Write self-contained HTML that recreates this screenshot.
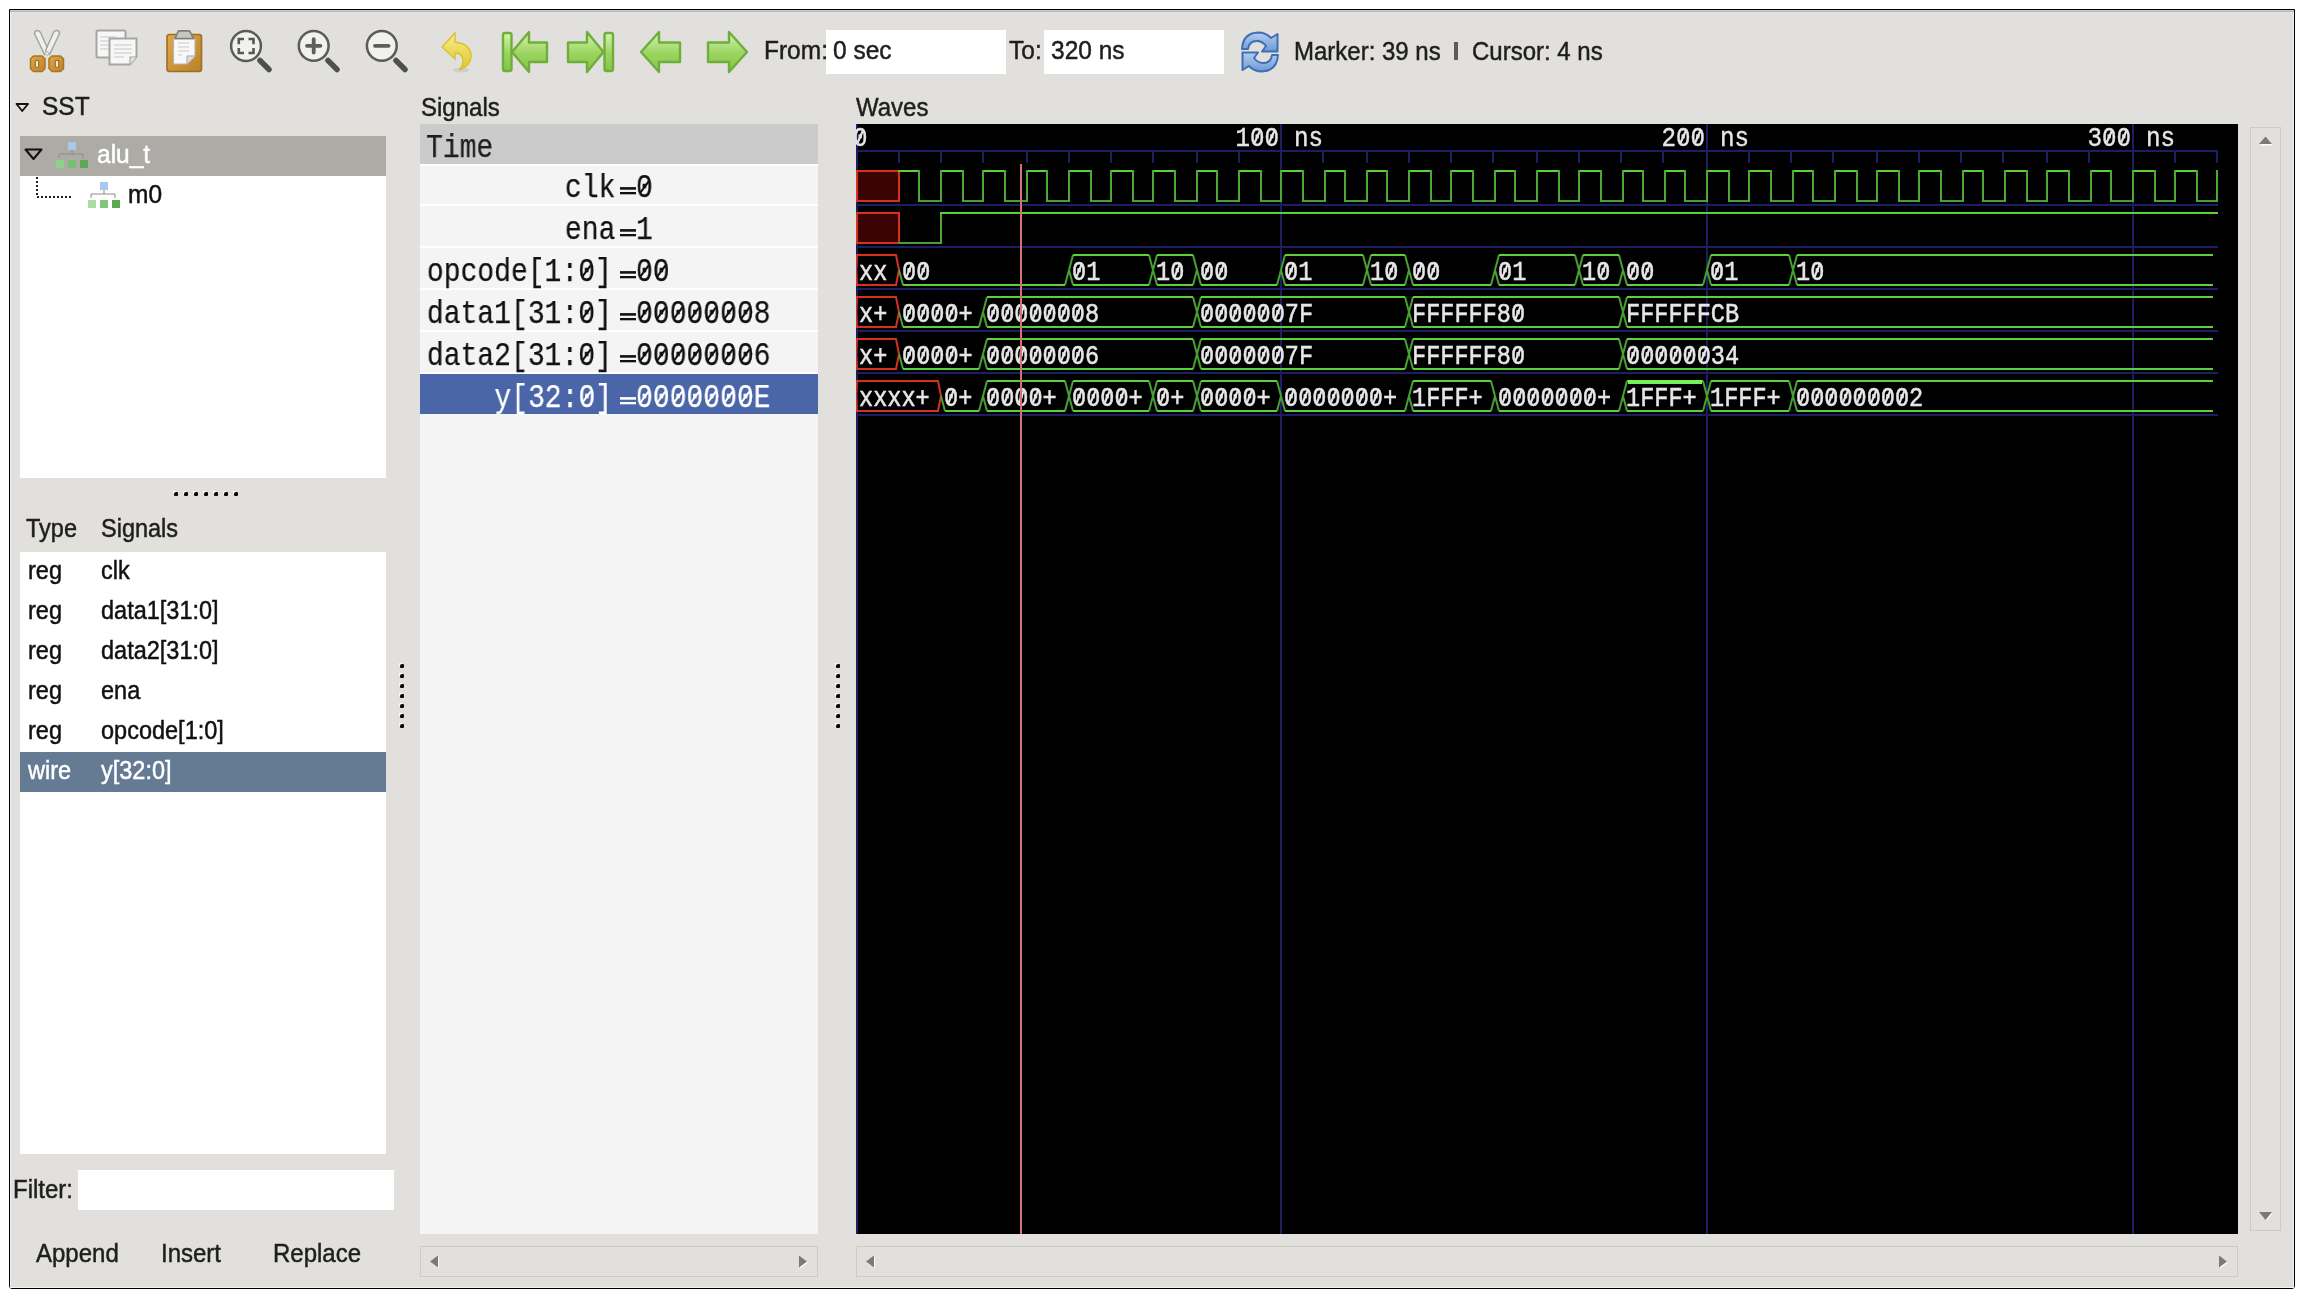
<!DOCTYPE html>
<html><head><meta charset="utf-8"><title>GTKWave</title>
<style>
html,body{margin:0;padding:0;background:#fff;width:2304px;height:1298px;overflow:hidden;position:relative}
body{font-family:"Liberation Sans", sans-serif}
</style></head><body>
<div style="position:absolute;left:9px;top:9px;width:2284px;height:1278px;border:1px solid #000;background:#e2e0dc;border-radius:0 0 3px 3px"></div>
<div style="position:absolute;left:10px;top:10px;width:2284px;height:1px;background:#c8c7c4;"></div>
<div style="position:absolute;left:10px;top:11px;width:2284px;height:1px;background:#bcbab6;"></div>
<div style="position:absolute;left:10px;top:12px;width:1px;height:1275px;background:#f2f1ee;"></div>
<div style="position:absolute;left:2293px;top:12px;width:1px;height:1275px;background:#f2f1ee;"></div>
<div style="position:absolute;left:10px;top:1287px;width:2284px;height:1px;background:#f2f1ee;"></div>

<svg style="position:absolute;left:0;top:0" width="1300" height="90" viewBox="0 0 1300 90">
<defs>
<linearGradient id="gArr" x1="0" y1="0" x2="0" y2="1"><stop offset="0" stop-color="#d6f2b0"/><stop offset="0.55" stop-color="#9ad45e"/><stop offset="1" stop-color="#86c44a"/></linearGradient>
<linearGradient id="gBlue" x1="0" y1="0" x2="0" y2="1"><stop offset="0" stop-color="#b4cdee"/><stop offset="1" stop-color="#6b9ad6"/></linearGradient>
<linearGradient id="gOr" x1="0" y1="0" x2="1" y2="1"><stop offset="0" stop-color="#e0a848"/><stop offset="1" stop-color="#b9822c"/></linearGradient>
<linearGradient id="gYel" x1="0" y1="0" x2="0" y2="1"><stop offset="0" stop-color="#f4ec88"/><stop offset="1" stop-color="#e2c82a"/></linearGradient>
</defs>
<!-- scissors -->
<g>
<path d="M34.5 33.5 Q34.8 30.3 37.5 30.5 Q40 30.8 41 33.5 L48.5 50.5 L44.5 54.5 Z" fill="#efefee" stroke="#a3a4a1" stroke-width="1.5" stroke-linejoin="round"/>
<path d="M59.5 33.5 Q59.2 30.3 56.5 30.5 Q54 30.8 53 33.5 L45.5 50.5 L49.5 54.5 Z" fill="#efefee" stroke="#a3a4a1" stroke-width="1.5" stroke-linejoin="round"/>
<circle cx="47" cy="53.5" r="1.8" fill="#eaeaea" stroke="#b9b9b7" stroke-width="1"/>
<path d="M33.5 56 H42 L45 58.8 V68.5 L42.2 71.5 H33.5 L30.5 68.8 V58.8 Z" fill="url(#gOr)" stroke="#a8761e" stroke-width="1.5" stroke-linejoin="round"/>
<path d="M52 56 H60.5 L63.5 58.8 V68.8 L60.5 71.5 H52 L49 68.5 V58.8 Z" fill="url(#gOr)" stroke="#a8761e" stroke-width="1.5" stroke-linejoin="round"/>
<rect x="35.3" y="60.5" width="3.4" height="6.8" rx="0.8" fill="#f1e6cf" stroke="#9c6a1a" stroke-width="1.1"/>
<rect x="55.3" y="60.5" width="3.4" height="6.8" rx="0.8" fill="#f1e6cf" stroke="#9c6a1a" stroke-width="1.1"/>
</g>
<!-- copy -->
<g>
<rect x="96.5" y="30.5" width="29" height="27" rx="1.5" fill="#f7f7f7" stroke="#a5a6a3" stroke-width="2"/>
<path d="M100 37h16 M100 41h16 M100 45h16 M100 49h16" stroke="#c8c9c6" stroke-width="1.2"/>
<path d="M109.5 38.5 H136.5 V57 L130 64.5 H109.5 Z" fill="#f7f7f7" stroke="#a5a6a3" stroke-width="2"/>
<path d="M130 64.5 V57 H136.5" fill="#e4e4e2" stroke="#a5a6a3" stroke-width="1.2"/>
<path d="M114 45h18 M114 49h18 M114 53h18 M114 57h10" stroke="#c8c9c6" stroke-width="1.2"/>
</g>
<!-- paste -->
<g>
<rect x="167" y="34.5" width="34.5" height="37" rx="2.5" fill="url(#gOr)" stroke="#9c6e22" stroke-width="1.6"/>
<path d="M173.5 39 H195 V56 L187 64 H173.5 Z" fill="#f8f8f8" stroke="#b5b5b2" stroke-width="1.2"/>
<path d="M187 64 V56 H195" fill="#dcdcda" stroke="#a5a6a3" stroke-width="1"/>
<path d="M178 43h11 M178 47h11 M178 51h11 M178 55h4" stroke="#c9c9c6" stroke-width="1.1"/>
<path d="M178.5 30.8 H189.5 L193.5 38.5 H175 Z" fill="#c6c7c1" stroke="#7f807c" stroke-width="1.7" stroke-linejoin="round"/>
</g>
<!-- zoom fit -->
<g>
<line x1="260" y1="60.5" x2="269" y2="69.5" stroke="#4e504f" stroke-width="5.5" stroke-linecap="round"/>
<circle cx="246" cy="46" r="14.9" fill="#f1f1f0" stroke="#5a5b5a" stroke-width="2.5"/>
<path d="M238.8 44.2 V39 H244 M248.5 39 H253.5 V44.2 M253.5 48 V53 H248.5 M244 53 H238.8 V48" fill="none" stroke="#555755" stroke-width="2.6"/>
</g>
<!-- zoom in -->
<g>
<line x1="328" y1="60.5" x2="337" y2="69.5" stroke="#4e504f" stroke-width="5.5" stroke-linecap="round"/>
<circle cx="313.7" cy="45.8" r="14.9" fill="#f1f1f0" stroke="#5a5b5a" stroke-width="2.5"/>
<path d="M307 45.8 H320.4 M313.7 39.1 V52.5" stroke="#5d5f5c" stroke-width="3.8" stroke-linecap="round"/>
</g>
<!-- zoom out -->
<g>
<line x1="396" y1="60.5" x2="405" y2="69.5" stroke="#4e504f" stroke-width="5.5" stroke-linecap="round"/>
<circle cx="381.8" cy="45.8" r="14.9" fill="#f1f1f0" stroke="#5a5b5a" stroke-width="2.5"/>
<path d="M375 45.8 H388.6" stroke="#5d5f5c" stroke-width="3.8" stroke-linecap="round"/>
</g>
<!-- undo -->
<g>
<ellipse cx="461" cy="70" rx="8" ry="2.5" fill="#000" opacity="0.08"/>
<path d="M455 33 L442 47 L455 59 L455 53 Q463 53 463 61 Q463 66 459 70 Q471 66 471 56 Q471 44 455 42 Z" fill="url(#gYel)" stroke="#d9c030" stroke-width="1.4"/>
</g>
<!-- first -->
<g stroke="#6fae3c" stroke-width="2.4" fill="url(#gArr)" stroke-linejoin="round">
<rect x="503" y="33" width="8.5" height="38" rx="2"/>
<path d="M512 52 L529 32 V42.5 H547 V62 H529 V72 Z"/>
</g>
<!-- last -->
<g stroke="#6fae3c" stroke-width="2.4" fill="url(#gArr)" stroke-linejoin="round">
<path d="M568 42.5 H587 V32 L603.5 52 L587 72 V62 H568 Z"/>
<rect x="604.5" y="33" width="8.5" height="38" rx="2"/>
</g>
<!-- back -->
<g stroke="#6fae3c" stroke-width="2.4" fill="url(#gArr)" stroke-linejoin="round">
<path d="M641 52 L659 32 V42.5 H680 V62 H659 V72 Z"/>
</g>
<!-- forward -->
<g stroke="#6fae3c" stroke-width="2.4" fill="url(#gArr)" stroke-linejoin="round">
<path d="M708 42.5 H729 V32 L747 52 L729 72 V62 H708 Z"/>
</g>
<!-- refresh -->
<g stroke="#3f6eb3" stroke-width="2" fill="url(#gBlue)" stroke-linejoin="round">
<path d="M1242 49 Q1243 33 1258 32.5 Q1266 32.5 1271 38 L1277.5 34 V51.5 H1262 L1266 46 Q1262 41 1257 41 Q1249 41 1248 49 Z"/>
<path d="M1278 55 Q1277 71 1262 71.5 Q1254 71.5 1249 66 L1242.5 70 V52.5 H1258 L1254 58 Q1258 63 1263 63 Q1271 63 1272 55 Z"/>
</g>
</svg>

<div style="position:absolute;left:826px;top:30px;width:180px;height:44px;background:#ffffff;"></div>
<div style="position:absolute;left:764px;top:39.26px;font-family:'Liberation Sans', sans-serif;font-size:24.5px;line-height:24.5px;white-space:pre;color:#1e1e1e;will-change:transform;transform:scale(1.0,1.07);transform-origin:left 20.74px;-webkit-text-stroke:0.45px #1e1e1e;">From:</div>
<div style="position:absolute;left:833px;top:39.26px;font-family:'Liberation Sans', sans-serif;font-size:24.5px;line-height:24.5px;white-space:pre;color:#1e1e1e;will-change:transform;transform:scale(1.0,1.07);transform-origin:left 20.74px;-webkit-text-stroke:0.45px #1e1e1e;">0 sec</div>
<div style="position:absolute;left:1044px;top:30px;width:180px;height:44px;background:#ffffff;"></div>
<div style="position:absolute;left:1009px;top:39.26px;font-family:'Liberation Sans', sans-serif;font-size:24.5px;line-height:24.5px;white-space:pre;color:#1e1e1e;will-change:transform;transform:scale(1.0,1.07);transform-origin:left 20.74px;-webkit-text-stroke:0.45px #1e1e1e;">To:</div>
<div style="position:absolute;left:1051px;top:39.26px;font-family:'Liberation Sans', sans-serif;font-size:24.5px;line-height:24.5px;white-space:pre;color:#1e1e1e;will-change:transform;transform:scale(1.0,1.07);transform-origin:left 20.74px;-webkit-text-stroke:0.45px #1e1e1e;">320 ns</div>
<div style="position:absolute;left:1294px;top:39.68px;font-family:'Liberation Sans', sans-serif;font-size:24px;line-height:24px;white-space:pre;color:#1e1e1e;will-change:transform;transform:scale(1.0,1.07);transform-origin:left 20.32px;-webkit-text-stroke:0.45px #1e1e1e;">Marker: 39 ns</div>
<div style="position:absolute;left:1454px;top:42px;width:4px;height:18px;background:#5c5c5c;"></div>
<div style="position:absolute;left:1471.5px;top:39.68px;font-family:'Liberation Sans', sans-serif;font-size:24px;line-height:24px;white-space:pre;color:#1e1e1e;will-change:transform;transform:scale(1.0,1.07);transform-origin:left 20.32px;-webkit-text-stroke:0.45px #1e1e1e;">Cursor: 4 ns</div>
<svg style="position:absolute;left:14px;top:100px" width="20" height="16"><path d="M2.5 4 H14 L8.25 11 Z" fill="none" stroke="#111" stroke-width="1.8" stroke-linejoin="round"/></svg>
<div style="position:absolute;left:42px;top:95.26px;font-family:'Liberation Sans', sans-serif;font-size:24.5px;line-height:24.5px;white-space:pre;color:#1e1e1e;will-change:transform;transform:scale(1.0,1.07);transform-origin:left 20.74px;-webkit-text-stroke:0.45px #1e1e1e;">SST</div>
<div style="position:absolute;left:20px;top:136px;width:366px;height:342px;background:#ffffff;"></div>
<div style="position:absolute;left:20px;top:136px;width:366px;height:40px;background:#adaba6;"></div>
<svg style="position:absolute;left:20px;top:136px" width="120" height="80"><path d="M5.5 13.5 H21.5 L13.5 23 Z" fill="none" stroke="#111" stroke-width="2" stroke-linejoin="round"/><rect x="48" y="6" width="8" height="8" fill="#a9c8ee"/><rect x="36" y="24" width="8" height="8" fill="#8fd08a"/><rect x="48" y="24" width="8" height="8" fill="#78c070"/><rect x="60" y="24" width="8" height="8" fill="#5aa852"/><path d="M39 22 V18 H63 V22 M52 14 V18" fill="none" stroke="#8a8a8a" stroke-width="1"/><path d="M17 41 V61 H52" fill="none" stroke="#222" stroke-width="2" stroke-dasharray="2,2"/><rect x="80" y="46" width="8" height="8" fill="#a9c8ee"/><rect x="68" y="64" width="8" height="8" fill="#a8dca0"/><rect x="80" y="64" width="8" height="8" fill="#82c67a"/><rect x="92" y="64" width="8" height="8" fill="#5aa852"/><path d="M71 62 V58 H95 V62 M84 54 V58" fill="none" stroke="#8a8a8a" stroke-width="1"/></svg>
<div style="position:absolute;left:97px;top:143.26px;font-family:'Liberation Sans', sans-serif;font-size:24.5px;line-height:24.5px;white-space:pre;color:#ffffff;will-change:transform;transform:scale(1.0,1.07);transform-origin:left 20.74px;-webkit-text-stroke:0.45px #ffffff;">alu_t</div>
<div style="position:absolute;left:128px;top:183.26px;font-family:'Liberation Sans', sans-serif;font-size:24.5px;line-height:24.5px;white-space:pre;color:#111;will-change:transform;transform:scale(1.0,1.07);transform-origin:left 20.74px;-webkit-text-stroke:0.45px #111;">m0</div>
<div style="position:absolute;left:173px;top:491px;width:3px;height:3px;background:#fff;border-radius:1px"></div>
<div style="position:absolute;left:174px;top:492px;width:4px;height:4px;background:#0a0a0a;border-radius:2px 1px 1px 1px"></div>
<div style="position:absolute;left:183px;top:491px;width:3px;height:3px;background:#fff;border-radius:1px"></div>
<div style="position:absolute;left:184px;top:492px;width:4px;height:4px;background:#0a0a0a;border-radius:2px 1px 1px 1px"></div>
<div style="position:absolute;left:193px;top:491px;width:3px;height:3px;background:#fff;border-radius:1px"></div>
<div style="position:absolute;left:194px;top:492px;width:4px;height:4px;background:#0a0a0a;border-radius:2px 1px 1px 1px"></div>
<div style="position:absolute;left:203px;top:491px;width:3px;height:3px;background:#fff;border-radius:1px"></div>
<div style="position:absolute;left:204px;top:492px;width:4px;height:4px;background:#0a0a0a;border-radius:2px 1px 1px 1px"></div>
<div style="position:absolute;left:213px;top:491px;width:3px;height:3px;background:#fff;border-radius:1px"></div>
<div style="position:absolute;left:214px;top:492px;width:4px;height:4px;background:#0a0a0a;border-radius:2px 1px 1px 1px"></div>
<div style="position:absolute;left:223px;top:491px;width:3px;height:3px;background:#fff;border-radius:1px"></div>
<div style="position:absolute;left:224px;top:492px;width:4px;height:4px;background:#0a0a0a;border-radius:2px 1px 1px 1px"></div>
<div style="position:absolute;left:233px;top:491px;width:3px;height:3px;background:#fff;border-radius:1px"></div>
<div style="position:absolute;left:234px;top:492px;width:4px;height:4px;background:#0a0a0a;border-radius:2px 1px 1px 1px"></div>
<div style="position:absolute;left:26px;top:518.10px;font-family:'Liberation Sans', sans-serif;font-size:23.5px;line-height:23.5px;white-space:pre;color:#1e1e1e;will-change:transform;transform:scale(1.0,1.07);transform-origin:left 19.90px;-webkit-text-stroke:0.45px #1e1e1e;">Type</div>
<div style="position:absolute;left:101px;top:518.10px;font-family:'Liberation Sans', sans-serif;font-size:23.5px;line-height:23.5px;white-space:pre;color:#1e1e1e;will-change:transform;transform:scale(1.0,1.07);transform-origin:left 19.90px;-webkit-text-stroke:0.45px #1e1e1e;">Signals</div>
<div style="position:absolute;left:20px;top:552px;width:366px;height:602px;background:#ffffff;"></div>
<div style="position:absolute;left:28px;top:559.90px;font-family:'Liberation Sans', sans-serif;font-size:23.5px;line-height:23.5px;white-space:pre;color:#111;will-change:transform;transform:scale(1.0,1.07);transform-origin:left 19.90px;-webkit-text-stroke:0.45px #111;">reg</div>
<div style="position:absolute;left:101px;top:559.90px;font-family:'Liberation Sans', sans-serif;font-size:23.5px;line-height:23.5px;white-space:pre;color:#111;will-change:transform;transform:scale(1.0,1.07);transform-origin:left 19.90px;-webkit-text-stroke:0.45px #111;">clk</div>
<div style="position:absolute;left:28px;top:599.90px;font-family:'Liberation Sans', sans-serif;font-size:23.5px;line-height:23.5px;white-space:pre;color:#111;will-change:transform;transform:scale(1.0,1.07);transform-origin:left 19.90px;-webkit-text-stroke:0.45px #111;">reg</div>
<div style="position:absolute;left:101px;top:599.90px;font-family:'Liberation Sans', sans-serif;font-size:23.5px;line-height:23.5px;white-space:pre;color:#111;will-change:transform;transform:scale(1.0,1.07);transform-origin:left 19.90px;-webkit-text-stroke:0.45px #111;">data1[31:0]</div>
<div style="position:absolute;left:28px;top:639.90px;font-family:'Liberation Sans', sans-serif;font-size:23.5px;line-height:23.5px;white-space:pre;color:#111;will-change:transform;transform:scale(1.0,1.07);transform-origin:left 19.90px;-webkit-text-stroke:0.45px #111;">reg</div>
<div style="position:absolute;left:101px;top:639.90px;font-family:'Liberation Sans', sans-serif;font-size:23.5px;line-height:23.5px;white-space:pre;color:#111;will-change:transform;transform:scale(1.0,1.07);transform-origin:left 19.90px;-webkit-text-stroke:0.45px #111;">data2[31:0]</div>
<div style="position:absolute;left:28px;top:679.90px;font-family:'Liberation Sans', sans-serif;font-size:23.5px;line-height:23.5px;white-space:pre;color:#111;will-change:transform;transform:scale(1.0,1.07);transform-origin:left 19.90px;-webkit-text-stroke:0.45px #111;">reg</div>
<div style="position:absolute;left:101px;top:679.90px;font-family:'Liberation Sans', sans-serif;font-size:23.5px;line-height:23.5px;white-space:pre;color:#111;will-change:transform;transform:scale(1.0,1.07);transform-origin:left 19.90px;-webkit-text-stroke:0.45px #111;">ena</div>
<div style="position:absolute;left:28px;top:719.90px;font-family:'Liberation Sans', sans-serif;font-size:23.5px;line-height:23.5px;white-space:pre;color:#111;will-change:transform;transform:scale(1.0,1.07);transform-origin:left 19.90px;-webkit-text-stroke:0.45px #111;">reg</div>
<div style="position:absolute;left:101px;top:719.90px;font-family:'Liberation Sans', sans-serif;font-size:23.5px;line-height:23.5px;white-space:pre;color:#111;will-change:transform;transform:scale(1.0,1.07);transform-origin:left 19.90px;-webkit-text-stroke:0.45px #111;">opcode[1:0]</div>
<div style="position:absolute;left:20px;top:752px;width:366px;height:40px;background:#657a93;"></div>
<div style="position:absolute;left:28px;top:759.90px;font-family:'Liberation Sans', sans-serif;font-size:23.5px;line-height:23.5px;white-space:pre;color:#ffffff;will-change:transform;transform:scale(1.0,1.07);transform-origin:left 19.90px;-webkit-text-stroke:0.45px #ffffff;">wire</div>
<div style="position:absolute;left:101px;top:759.90px;font-family:'Liberation Sans', sans-serif;font-size:23.5px;line-height:23.5px;white-space:pre;color:#ffffff;will-change:transform;transform:scale(1.0,1.07);transform-origin:left 19.90px;-webkit-text-stroke:0.45px #ffffff;">y[32:0]</div>
<div style="position:absolute;left:13px;top:1177.68px;font-family:'Liberation Sans', sans-serif;font-size:24px;line-height:24px;white-space:pre;color:#1e1e1e;will-change:transform;transform:scale(1.0,1.07);transform-origin:left 20.32px;-webkit-text-stroke:0.45px #1e1e1e;">Filter:</div>
<div style="position:absolute;left:78px;top:1170px;width:316px;height:40px;background:#ffffff;"></div>
<div style="position:absolute;left:36px;top:1241.68px;font-family:'Liberation Sans', sans-serif;font-size:24px;line-height:24px;white-space:pre;color:#1e1e1e;will-change:transform;transform:scale(1.0,1.07);transform-origin:left 20.32px;-webkit-text-stroke:0.45px #1e1e1e;">Append</div>
<div style="position:absolute;left:161px;top:1241.68px;font-family:'Liberation Sans', sans-serif;font-size:24px;line-height:24px;white-space:pre;color:#1e1e1e;will-change:transform;transform:scale(1.0,1.07);transform-origin:left 20.32px;-webkit-text-stroke:0.45px #1e1e1e;">Insert</div>
<div style="position:absolute;left:273px;top:1241.68px;font-family:'Liberation Sans', sans-serif;font-size:24px;line-height:24px;white-space:pre;color:#1e1e1e;will-change:transform;transform:scale(1.0,1.07);transform-origin:left 20.32px;-webkit-text-stroke:0.45px #1e1e1e;">Replace</div>
<div style="position:absolute;left:399px;top:663px;width:3px;height:3px;background:#fff;border-radius:1px"></div>
<div style="position:absolute;left:400px;top:664px;width:4px;height:4px;background:#0a0a0a;border-radius:2px 1px 1px 1px"></div>
<div style="position:absolute;left:399px;top:673px;width:3px;height:3px;background:#fff;border-radius:1px"></div>
<div style="position:absolute;left:400px;top:674px;width:4px;height:4px;background:#0a0a0a;border-radius:2px 1px 1px 1px"></div>
<div style="position:absolute;left:399px;top:683px;width:3px;height:3px;background:#fff;border-radius:1px"></div>
<div style="position:absolute;left:400px;top:684px;width:4px;height:4px;background:#0a0a0a;border-radius:2px 1px 1px 1px"></div>
<div style="position:absolute;left:399px;top:693px;width:3px;height:3px;background:#fff;border-radius:1px"></div>
<div style="position:absolute;left:400px;top:694px;width:4px;height:4px;background:#0a0a0a;border-radius:2px 1px 1px 1px"></div>
<div style="position:absolute;left:399px;top:703px;width:3px;height:3px;background:#fff;border-radius:1px"></div>
<div style="position:absolute;left:400px;top:704px;width:4px;height:4px;background:#0a0a0a;border-radius:2px 1px 1px 1px"></div>
<div style="position:absolute;left:399px;top:713px;width:3px;height:3px;background:#fff;border-radius:1px"></div>
<div style="position:absolute;left:400px;top:714px;width:4px;height:4px;background:#0a0a0a;border-radius:2px 1px 1px 1px"></div>
<div style="position:absolute;left:399px;top:723px;width:3px;height:3px;background:#fff;border-radius:1px"></div>
<div style="position:absolute;left:400px;top:724px;width:4px;height:4px;background:#0a0a0a;border-radius:2px 1px 1px 1px"></div>
<div style="position:absolute;left:835px;top:663px;width:3px;height:3px;background:#fff;border-radius:1px"></div>
<div style="position:absolute;left:836px;top:664px;width:4px;height:4px;background:#0a0a0a;border-radius:2px 1px 1px 1px"></div>
<div style="position:absolute;left:835px;top:673px;width:3px;height:3px;background:#fff;border-radius:1px"></div>
<div style="position:absolute;left:836px;top:674px;width:4px;height:4px;background:#0a0a0a;border-radius:2px 1px 1px 1px"></div>
<div style="position:absolute;left:835px;top:683px;width:3px;height:3px;background:#fff;border-radius:1px"></div>
<div style="position:absolute;left:836px;top:684px;width:4px;height:4px;background:#0a0a0a;border-radius:2px 1px 1px 1px"></div>
<div style="position:absolute;left:835px;top:693px;width:3px;height:3px;background:#fff;border-radius:1px"></div>
<div style="position:absolute;left:836px;top:694px;width:4px;height:4px;background:#0a0a0a;border-radius:2px 1px 1px 1px"></div>
<div style="position:absolute;left:835px;top:703px;width:3px;height:3px;background:#fff;border-radius:1px"></div>
<div style="position:absolute;left:836px;top:704px;width:4px;height:4px;background:#0a0a0a;border-radius:2px 1px 1px 1px"></div>
<div style="position:absolute;left:835px;top:713px;width:3px;height:3px;background:#fff;border-radius:1px"></div>
<div style="position:absolute;left:836px;top:714px;width:4px;height:4px;background:#0a0a0a;border-radius:2px 1px 1px 1px"></div>
<div style="position:absolute;left:835px;top:723px;width:3px;height:3px;background:#fff;border-radius:1px"></div>
<div style="position:absolute;left:836px;top:724px;width:4px;height:4px;background:#0a0a0a;border-radius:2px 1px 1px 1px"></div>
<div style="position:absolute;left:420.5px;top:95.68px;font-family:'Liberation Sans', sans-serif;font-size:24px;line-height:24px;white-space:pre;color:#1e1e1e;will-change:transform;transform:scale(1.0,1.07);transform-origin:left 20.32px;-webkit-text-stroke:0.45px #1e1e1e;">Signals</div>
<div style="position:absolute;left:420px;top:124px;width:398px;height:1110px;background:#f4f4f4;"></div>
<div style="position:absolute;left:420px;top:124px;width:398px;height:40px;background:#cbcbcb;"></div>
<div style="position:absolute;left:420px;top:164px;width:398px;height:2px;background:#ffffff;"></div>
<div style="position:absolute;left:425.5px;top:133.18px;font-family:'Liberation Mono', monospace;font-size:32.4px;line-height:32.4px;white-space:pre;color:#1e1e1e;will-change:transform;transform:scale(0.865,1.0);transform-origin:left 24.82px;-webkit-text-stroke:0.25px #1e1e1e;">Time</div>
<div style="position:absolute;left:420px;top:204px;width:398px;height:2px;background:#ffffff;"></div>
<div style="position:absolute;right:1688.5683886718748px;top:172.68px;font-family:'Liberation Mono', monospace;font-size:32.4px;line-height:32.4px;white-space:pre;color:#111;will-change:transform;transform:scale(0.865,1.0);transform-origin:right 24.82px;-webkit-text-stroke:0.25px #111;">clk</div>
<div style="position:absolute;left:636px;top:172.68px;font-family:'Liberation Mono', monospace;font-size:32.4px;line-height:32.4px;white-space:pre;color:#111;will-change:transform;transform:scale(0.865,1.0);transform-origin:left 24.82px;-webkit-text-stroke:0.25px #111;">0</div>
<div style="position:absolute;left:420px;top:246px;width:398px;height:2px;background:#ffffff;"></div>
<div style="position:absolute;right:1688.5683886718748px;top:214.68px;font-family:'Liberation Mono', monospace;font-size:32.4px;line-height:32.4px;white-space:pre;color:#111;will-change:transform;transform:scale(0.865,1.0);transform-origin:right 24.82px;-webkit-text-stroke:0.25px #111;">ena</div>
<div style="position:absolute;left:636px;top:214.68px;font-family:'Liberation Mono', monospace;font-size:32.4px;line-height:32.4px;white-space:pre;color:#111;will-change:transform;transform:scale(0.865,1.0);transform-origin:left 24.82px;-webkit-text-stroke:0.25px #111;">1</div>
<div style="position:absolute;left:420px;top:288px;width:398px;height:2px;background:#ffffff;"></div>
<div style="position:absolute;right:1692.3619570312499px;top:256.68px;font-family:'Liberation Mono', monospace;font-size:32.4px;line-height:32.4px;white-space:pre;color:#111;will-change:transform;transform:scale(0.865,1.0);transform-origin:right 24.82px;-webkit-text-stroke:0.25px #111;">opcode[1:0]</div>
<div style="position:absolute;left:636px;top:256.68px;font-family:'Liberation Mono', monospace;font-size:32.4px;line-height:32.4px;white-space:pre;color:#111;will-change:transform;transform:scale(0.865,1.0);transform-origin:left 24.82px;-webkit-text-stroke:0.25px #111;">00</div>
<div style="position:absolute;left:420px;top:330px;width:398px;height:2px;background:#ffffff;"></div>
<div style="position:absolute;right:1692.3619570312499px;top:298.68px;font-family:'Liberation Mono', monospace;font-size:32.4px;line-height:32.4px;white-space:pre;color:#111;will-change:transform;transform:scale(0.865,1.0);transform-origin:right 24.82px;-webkit-text-stroke:0.25px #111;">data1[31:0]</div>
<div style="position:absolute;left:636px;top:298.68px;font-family:'Liberation Mono', monospace;font-size:32.4px;line-height:32.4px;white-space:pre;color:#111;will-change:transform;transform:scale(0.865,1.0);transform-origin:left 24.82px;-webkit-text-stroke:0.25px #111;">00000008</div>
<div style="position:absolute;left:420px;top:372px;width:398px;height:2px;background:#ffffff;"></div>
<div style="position:absolute;right:1692.3619570312499px;top:340.68px;font-family:'Liberation Mono', monospace;font-size:32.4px;line-height:32.4px;white-space:pre;color:#111;will-change:transform;transform:scale(0.865,1.0);transform-origin:right 24.82px;-webkit-text-stroke:0.25px #111;">data2[31:0]</div>
<div style="position:absolute;left:636px;top:340.68px;font-family:'Liberation Mono', monospace;font-size:32.4px;line-height:32.4px;white-space:pre;color:#111;will-change:transform;transform:scale(0.865,1.0);transform-origin:left 24.82px;-webkit-text-stroke:0.25px #111;">00000006</div>
<div style="position:absolute;left:420px;top:374px;width:398px;height:40px;background:#4a65a8;"></div>
<div style="position:absolute;right:1692.3619570312499px;top:382.68px;font-family:'Liberation Mono', monospace;font-size:32.4px;line-height:32.4px;white-space:pre;color:#ffffff;will-change:transform;transform:scale(0.865,1.0);transform-origin:right 24.82px;-webkit-text-stroke:0.25px #ffffff;">y[32:0]</div>
<div style="position:absolute;left:636px;top:382.68px;font-family:'Liberation Mono', monospace;font-size:32.4px;line-height:32.4px;white-space:pre;color:#ffffff;will-change:transform;transform:scale(0.865,1.0);transform-origin:left 24.82px;-webkit-text-stroke:0.25px #ffffff;">0000000E</div>
<svg style="position:absolute;left:0;top:0;will-change:transform" width="900" height="450"><rect x="620" y="187.1" width="16" height="2.6" fill="#111"/><rect x="620" y="192.0" width="16" height="2.3" fill="#111"/><line x1="640.1" y1="193.0" x2="648.7" y2="181.3" stroke="#111" stroke-width="2.1"/><rect x="620" y="229.1" width="16" height="2.6" fill="#111"/><rect x="620" y="234.0" width="16" height="2.3" fill="#111"/><rect x="620" y="271.1" width="16" height="2.6" fill="#111"/><rect x="620" y="276.0" width="16" height="2.3" fill="#111"/><line x1="582.1" y1="277.0" x2="590.7" y2="265.3" stroke="#111" stroke-width="2.1"/><line x1="640.1" y1="277.0" x2="648.7" y2="265.3" stroke="#111" stroke-width="2.1"/><line x1="656.9" y1="277.0" x2="665.5" y2="265.3" stroke="#111" stroke-width="2.1"/><rect x="620" y="313.1" width="16" height="2.6" fill="#111"/><rect x="620" y="318.0" width="16" height="2.3" fill="#111"/><line x1="582.1" y1="319.0" x2="590.7" y2="307.3" stroke="#111" stroke-width="2.1"/><line x1="640.1" y1="319.0" x2="648.7" y2="307.3" stroke="#111" stroke-width="2.1"/><line x1="656.9" y1="319.0" x2="665.5" y2="307.3" stroke="#111" stroke-width="2.1"/><line x1="673.7" y1="319.0" x2="682.3" y2="307.3" stroke="#111" stroke-width="2.1"/><line x1="690.6" y1="319.0" x2="699.2" y2="307.3" stroke="#111" stroke-width="2.1"/><line x1="707.4" y1="319.0" x2="716.0" y2="307.3" stroke="#111" stroke-width="2.1"/><line x1="724.2" y1="319.0" x2="732.8" y2="307.3" stroke="#111" stroke-width="2.1"/><line x1="741.0" y1="319.0" x2="749.6" y2="307.3" stroke="#111" stroke-width="2.1"/><rect x="620" y="355.1" width="16" height="2.6" fill="#111"/><rect x="620" y="360.0" width="16" height="2.3" fill="#111"/><line x1="582.1" y1="361.0" x2="590.7" y2="349.3" stroke="#111" stroke-width="2.1"/><line x1="640.1" y1="361.0" x2="648.7" y2="349.3" stroke="#111" stroke-width="2.1"/><line x1="656.9" y1="361.0" x2="665.5" y2="349.3" stroke="#111" stroke-width="2.1"/><line x1="673.7" y1="361.0" x2="682.3" y2="349.3" stroke="#111" stroke-width="2.1"/><line x1="690.6" y1="361.0" x2="699.2" y2="349.3" stroke="#111" stroke-width="2.1"/><line x1="707.4" y1="361.0" x2="716.0" y2="349.3" stroke="#111" stroke-width="2.1"/><line x1="724.2" y1="361.0" x2="732.8" y2="349.3" stroke="#111" stroke-width="2.1"/><line x1="741.0" y1="361.0" x2="749.6" y2="349.3" stroke="#111" stroke-width="2.1"/><rect x="620" y="397.1" width="16" height="2.6" fill="#ffffff"/><rect x="620" y="402.0" width="16" height="2.3" fill="#ffffff"/><line x1="582.1" y1="403.0" x2="590.7" y2="391.3" stroke="#ffffff" stroke-width="2.1"/><line x1="640.1" y1="403.0" x2="648.7" y2="391.3" stroke="#ffffff" stroke-width="2.1"/><line x1="656.9" y1="403.0" x2="665.5" y2="391.3" stroke="#ffffff" stroke-width="2.1"/><line x1="673.7" y1="403.0" x2="682.3" y2="391.3" stroke="#ffffff" stroke-width="2.1"/><line x1="690.6" y1="403.0" x2="699.2" y2="391.3" stroke="#ffffff" stroke-width="2.1"/><line x1="707.4" y1="403.0" x2="716.0" y2="391.3" stroke="#ffffff" stroke-width="2.1"/><line x1="724.2" y1="403.0" x2="732.8" y2="391.3" stroke="#ffffff" stroke-width="2.1"/><line x1="741.0" y1="403.0" x2="749.6" y2="391.3" stroke="#ffffff" stroke-width="2.1"/></svg>
<div style="position:absolute;left:420px;top:1246px;width:396px;height:29px;border:1px solid #cdcbc7;background:#e2e0dc"></div>
<svg style="position:absolute;left:420px;top:1246px" width="398" height="31"><path d="M11 16.5 L19 10.5 V22.5 Z" fill="#fbfbfa"/><path d="M380 10.5 L388 16.5 L380 22.5 Z" fill="#fbfbfa"/><path d="M10 15.5 L18 9.5 V21.5 Z" fill="#7a7a7a"/><path d="M379 9.5 L387 15.5 L379 21.5 Z" fill="#7a7a7a"/></svg>
<div style="position:absolute;left:856px;top:1246px;width:1380px;height:29px;border:1px solid #cdcbc7;background:#e2e0dc"></div>
<svg style="position:absolute;left:856px;top:1246px" width="1382" height="31"><path d="M11 16.5 L19 10.5 V22.5 Z" fill="#fbfbfa"/><path d="M1364 10.5 L1372 16.5 L1364 22.5 Z" fill="#fbfbfa"/><path d="M10 15.5 L18 9.5 V21.5 Z" fill="#7a7a7a"/><path d="M1363 9.5 L1371 15.5 L1363 21.5 Z" fill="#7a7a7a"/></svg>
<div style="position:absolute;left:2250px;top:127px;width:29px;height:1102px;border:1px solid #cdcbc7;background:#e2e0dc"></div>
<svg style="position:absolute;left:2250px;top:127px" width="31" height="1104"><path d="M10 18.5 L16.5 11 L23 18.5 Z" fill="#fbfbfa"/><path d="M10 1086 L16.5 1094 L23 1086 Z" fill="#fbfbfa"/><path d="M9 17 L15.5 9.5 L22 17 Z" fill="#7a7a7a"/><path d="M9 1085 L15.5 1093 L22 1085 Z" fill="#7a7a7a"/></svg>
<div style="position:absolute;left:856px;top:95.68px;font-family:'Liberation Sans', sans-serif;font-size:24px;line-height:24px;white-space:pre;color:#1e1e1e;will-change:transform;transform:scale(1.0,1.07);transform-origin:left 20.32px;-webkit-text-stroke:0.45px #1e1e1e;">Waves</div>
<svg style="position:absolute;left:0;top:0;will-change:transform" width="2304" height="1298" viewBox="0 0 2304 1298"><defs><clipPath id="wclip"><rect x="856" y="124" width="1382" height="1110"/></clipPath></defs><g clip-path="url(#wclip)"><rect x="856" y="124" width="1382" height="1110" fill="#000"/><rect x="856" y="150" width="1362" height="2" fill="#1c1d62"/><rect x="898" y="150" width="2" height="13" fill="#1c1d62"/><rect x="940" y="150" width="2" height="13" fill="#1c1d62"/><rect x="982" y="150" width="2" height="13" fill="#1c1d62"/><rect x="1026" y="150" width="2" height="13" fill="#1c1d62"/><rect x="1068" y="150" width="2" height="13" fill="#1c1d62"/><rect x="1110" y="150" width="2" height="13" fill="#1c1d62"/><rect x="1152" y="150" width="2" height="13" fill="#1c1d62"/><rect x="1196" y="150" width="2" height="13" fill="#1c1d62"/><rect x="1238" y="150" width="2" height="13" fill="#1c1d62"/><rect x="1280" y="150" width="2" height="13" fill="#1c1d62"/><rect x="1322" y="150" width="2" height="13" fill="#1c1d62"/><rect x="1366" y="150" width="2" height="13" fill="#1c1d62"/><rect x="1408" y="150" width="2" height="13" fill="#1c1d62"/><rect x="1450" y="150" width="2" height="13" fill="#1c1d62"/><rect x="1492" y="150" width="2" height="13" fill="#1c1d62"/><rect x="1536" y="150" width="2" height="13" fill="#1c1d62"/><rect x="1578" y="150" width="2" height="13" fill="#1c1d62"/><rect x="1620" y="150" width="2" height="13" fill="#1c1d62"/><rect x="1662" y="150" width="2" height="13" fill="#1c1d62"/><rect x="1706" y="150" width="2" height="13" fill="#1c1d62"/><rect x="1748" y="150" width="2" height="13" fill="#1c1d62"/><rect x="1790" y="150" width="2" height="13" fill="#1c1d62"/><rect x="1832" y="150" width="2" height="13" fill="#1c1d62"/><rect x="1876" y="150" width="2" height="13" fill="#1c1d62"/><rect x="1918" y="150" width="2" height="13" fill="#1c1d62"/><rect x="1960" y="150" width="2" height="13" fill="#1c1d62"/><rect x="2002" y="150" width="2" height="13" fill="#1c1d62"/><rect x="2046" y="150" width="2" height="13" fill="#1c1d62"/><rect x="2088" y="150" width="2" height="13" fill="#1c1d62"/><rect x="2132" y="150" width="2" height="13" fill="#1c1d62"/><rect x="2174" y="150" width="2" height="13" fill="#1c1d62"/><rect x="2216" y="150" width="2" height="13" fill="#1c1d62"/><rect x="856" y="124" width="2" height="1110" fill="#1c1d62"/><rect x="1280" y="124" width="2" height="1110" fill="#1c1d62"/><rect x="1706" y="124" width="2" height="1110" fill="#1c1d62"/><rect x="2132" y="124" width="2" height="1110" fill="#1c1d62"/><rect x="856" y="204" width="1362" height="2" fill="#1c1d62"/><rect x="856" y="246" width="1362" height="2" fill="#1c1d62"/><rect x="856" y="288" width="1362" height="2" fill="#1c1d62"/><rect x="856" y="330" width="1362" height="2" fill="#1c1d62"/><rect x="856" y="372" width="1362" height="2" fill="#1c1d62"/><rect x="856" y="414" width="1362" height="2" fill="#1c1d62"/><text x="0" y="0" transform="translate(867.5,146) scale(0.89,1)" text-anchor="end" font-family="'Liberation Mono', monospace" font-size="27.2" fill="#e6e6e6" stroke="#e6e6e6" stroke-width="0.4">0</text><line x1="857.6" y1="142.8" x2="862.8" y2="131.0" stroke="#e6e6e6" stroke-width="2.2"/><text x="0" y="0" transform="translate(1279,146) scale(0.89,1)" text-anchor="end" font-family="'Liberation Mono', monospace" font-size="27.2" fill="#e6e6e6" stroke="#e6e6e6" stroke-width="0.4">100</text><line x1="1254.6" y1="142.8" x2="1259.8" y2="131.0" stroke="#e6e6e6" stroke-width="2.2"/><line x1="1269.1" y1="142.8" x2="1274.3" y2="131.0" stroke="#e6e6e6" stroke-width="2.2"/><text x="0" y="0" transform="translate(1294,146) scale(0.89,1)" text-anchor="start" font-family="'Liberation Mono', monospace" font-size="27.2" fill="#e6e6e6" stroke="#e6e6e6" stroke-width="0.4">ns</text><text x="0" y="0" transform="translate(1705,146) scale(0.89,1)" text-anchor="end" font-family="'Liberation Mono', monospace" font-size="27.2" fill="#e6e6e6" stroke="#e6e6e6" stroke-width="0.4">200</text><line x1="1680.6" y1="142.8" x2="1685.8" y2="131.0" stroke="#e6e6e6" stroke-width="2.2"/><line x1="1695.1" y1="142.8" x2="1700.3" y2="131.0" stroke="#e6e6e6" stroke-width="2.2"/><text x="0" y="0" transform="translate(1720,146) scale(0.89,1)" text-anchor="start" font-family="'Liberation Mono', monospace" font-size="27.2" fill="#e6e6e6" stroke="#e6e6e6" stroke-width="0.4">ns</text><text x="0" y="0" transform="translate(2131,146) scale(0.89,1)" text-anchor="end" font-family="'Liberation Mono', monospace" font-size="27.2" fill="#e6e6e6" stroke="#e6e6e6" stroke-width="0.4">300</text><line x1="2106.6" y1="142.8" x2="2111.8" y2="131.0" stroke="#e6e6e6" stroke-width="2.2"/><line x1="2121.1" y1="142.8" x2="2126.3" y2="131.0" stroke="#e6e6e6" stroke-width="2.2"/><text x="0" y="0" transform="translate(2146,146) scale(0.89,1)" text-anchor="start" font-family="'Liberation Mono', monospace" font-size="27.2" fill="#e6e6e6" stroke="#e6e6e6" stroke-width="0.4">ns</text><rect x="857" y="171" width="42" height="30" fill="#3a0404" stroke="#d8301f" stroke-width="2"/><rect x="898" y="170" width="22" height="2" fill="#5ccf3c"/><rect x="918" y="200" width="24" height="2" fill="#43a232"/><rect x="918" y="170" width="2" height="32" fill="#4aaa34"/><rect x="940" y="170" width="24" height="2" fill="#5ccf3c"/><rect x="940" y="170" width="2" height="32" fill="#4aaa34"/><rect x="962" y="200" width="22" height="2" fill="#43a232"/><rect x="962" y="170" width="2" height="32" fill="#4aaa34"/><rect x="982" y="170" width="24" height="2" fill="#5ccf3c"/><rect x="982" y="170" width="2" height="32" fill="#4aaa34"/><rect x="1004" y="200" width="24" height="2" fill="#43a232"/><rect x="1004" y="170" width="2" height="32" fill="#4aaa34"/><rect x="1026" y="170" width="22" height="2" fill="#5ccf3c"/><rect x="1026" y="170" width="2" height="32" fill="#4aaa34"/><rect x="1046" y="200" width="24" height="2" fill="#43a232"/><rect x="1046" y="170" width="2" height="32" fill="#4aaa34"/><rect x="1068" y="170" width="24" height="2" fill="#5ccf3c"/><rect x="1068" y="170" width="2" height="32" fill="#4aaa34"/><rect x="1090" y="200" width="22" height="2" fill="#43a232"/><rect x="1090" y="170" width="2" height="32" fill="#4aaa34"/><rect x="1110" y="170" width="24" height="2" fill="#5ccf3c"/><rect x="1110" y="170" width="2" height="32" fill="#4aaa34"/><rect x="1132" y="200" width="22" height="2" fill="#43a232"/><rect x="1132" y="170" width="2" height="32" fill="#4aaa34"/><rect x="1152" y="170" width="24" height="2" fill="#5ccf3c"/><rect x="1152" y="170" width="2" height="32" fill="#4aaa34"/><rect x="1174" y="200" width="24" height="2" fill="#43a232"/><rect x="1174" y="170" width="2" height="32" fill="#4aaa34"/><rect x="1196" y="170" width="22" height="2" fill="#5ccf3c"/><rect x="1196" y="170" width="2" height="32" fill="#4aaa34"/><rect x="1216" y="200" width="24" height="2" fill="#43a232"/><rect x="1216" y="170" width="2" height="32" fill="#4aaa34"/><rect x="1238" y="170" width="24" height="2" fill="#5ccf3c"/><rect x="1238" y="170" width="2" height="32" fill="#4aaa34"/><rect x="1260" y="200" width="22" height="2" fill="#43a232"/><rect x="1260" y="170" width="2" height="32" fill="#4aaa34"/><rect x="1280" y="170" width="24" height="2" fill="#5ccf3c"/><rect x="1280" y="170" width="2" height="32" fill="#4aaa34"/><rect x="1302" y="200" width="24" height="2" fill="#43a232"/><rect x="1302" y="170" width="2" height="32" fill="#4aaa34"/><rect x="1324" y="170" width="22" height="2" fill="#5ccf3c"/><rect x="1324" y="170" width="2" height="32" fill="#4aaa34"/><rect x="1344" y="200" width="24" height="2" fill="#43a232"/><rect x="1344" y="170" width="2" height="32" fill="#4aaa34"/><rect x="1366" y="170" width="22" height="2" fill="#5ccf3c"/><rect x="1366" y="170" width="2" height="32" fill="#4aaa34"/><rect x="1386" y="200" width="24" height="2" fill="#43a232"/><rect x="1386" y="170" width="2" height="32" fill="#4aaa34"/><rect x="1408" y="170" width="24" height="2" fill="#5ccf3c"/><rect x="1408" y="170" width="2" height="32" fill="#4aaa34"/><rect x="1430" y="200" width="22" height="2" fill="#43a232"/><rect x="1430" y="170" width="2" height="32" fill="#4aaa34"/><rect x="1450" y="170" width="24" height="2" fill="#5ccf3c"/><rect x="1450" y="170" width="2" height="32" fill="#4aaa34"/><rect x="1472" y="200" width="24" height="2" fill="#43a232"/><rect x="1472" y="170" width="2" height="32" fill="#4aaa34"/><rect x="1494" y="170" width="22" height="2" fill="#5ccf3c"/><rect x="1494" y="170" width="2" height="32" fill="#4aaa34"/><rect x="1514" y="200" width="24" height="2" fill="#43a232"/><rect x="1514" y="170" width="2" height="32" fill="#4aaa34"/><rect x="1536" y="170" width="24" height="2" fill="#5ccf3c"/><rect x="1536" y="170" width="2" height="32" fill="#4aaa34"/><rect x="1558" y="200" width="22" height="2" fill="#43a232"/><rect x="1558" y="170" width="2" height="32" fill="#4aaa34"/><rect x="1578" y="170" width="24" height="2" fill="#5ccf3c"/><rect x="1578" y="170" width="2" height="32" fill="#4aaa34"/><rect x="1600" y="200" width="24" height="2" fill="#43a232"/><rect x="1600" y="170" width="2" height="32" fill="#4aaa34"/><rect x="1622" y="170" width="22" height="2" fill="#5ccf3c"/><rect x="1622" y="170" width="2" height="32" fill="#4aaa34"/><rect x="1642" y="200" width="24" height="2" fill="#43a232"/><rect x="1642" y="170" width="2" height="32" fill="#4aaa34"/><rect x="1664" y="170" width="22" height="2" fill="#5ccf3c"/><rect x="1664" y="170" width="2" height="32" fill="#4aaa34"/><rect x="1684" y="200" width="24" height="2" fill="#43a232"/><rect x="1684" y="170" width="2" height="32" fill="#4aaa34"/><rect x="1706" y="170" width="24" height="2" fill="#5ccf3c"/><rect x="1706" y="170" width="2" height="32" fill="#4aaa34"/><rect x="1728" y="200" width="22" height="2" fill="#43a232"/><rect x="1728" y="170" width="2" height="32" fill="#4aaa34"/><rect x="1748" y="170" width="24" height="2" fill="#5ccf3c"/><rect x="1748" y="170" width="2" height="32" fill="#4aaa34"/><rect x="1770" y="200" width="24" height="2" fill="#43a232"/><rect x="1770" y="170" width="2" height="32" fill="#4aaa34"/><rect x="1792" y="170" width="22" height="2" fill="#5ccf3c"/><rect x="1792" y="170" width="2" height="32" fill="#4aaa34"/><rect x="1812" y="200" width="24" height="2" fill="#43a232"/><rect x="1812" y="170" width="2" height="32" fill="#4aaa34"/><rect x="1834" y="170" width="24" height="2" fill="#5ccf3c"/><rect x="1834" y="170" width="2" height="32" fill="#4aaa34"/><rect x="1856" y="200" width="22" height="2" fill="#43a232"/><rect x="1856" y="170" width="2" height="32" fill="#4aaa34"/><rect x="1876" y="170" width="24" height="2" fill="#5ccf3c"/><rect x="1876" y="170" width="2" height="32" fill="#4aaa34"/><rect x="1898" y="200" width="22" height="2" fill="#43a232"/><rect x="1898" y="170" width="2" height="32" fill="#4aaa34"/><rect x="1918" y="170" width="24" height="2" fill="#5ccf3c"/><rect x="1918" y="170" width="2" height="32" fill="#4aaa34"/><rect x="1940" y="200" width="24" height="2" fill="#43a232"/><rect x="1940" y="170" width="2" height="32" fill="#4aaa34"/><rect x="1962" y="170" width="22" height="2" fill="#5ccf3c"/><rect x="1962" y="170" width="2" height="32" fill="#4aaa34"/><rect x="1982" y="200" width="24" height="2" fill="#43a232"/><rect x="1982" y="170" width="2" height="32" fill="#4aaa34"/><rect x="2004" y="170" width="24" height="2" fill="#5ccf3c"/><rect x="2004" y="170" width="2" height="32" fill="#4aaa34"/><rect x="2026" y="200" width="22" height="2" fill="#43a232"/><rect x="2026" y="170" width="2" height="32" fill="#4aaa34"/><rect x="2046" y="170" width="24" height="2" fill="#5ccf3c"/><rect x="2046" y="170" width="2" height="32" fill="#4aaa34"/><rect x="2068" y="200" width="24" height="2" fill="#43a232"/><rect x="2068" y="170" width="2" height="32" fill="#4aaa34"/><rect x="2090" y="170" width="22" height="2" fill="#5ccf3c"/><rect x="2090" y="170" width="2" height="32" fill="#4aaa34"/><rect x="2110" y="200" width="24" height="2" fill="#43a232"/><rect x="2110" y="170" width="2" height="32" fill="#4aaa34"/><rect x="2132" y="170" width="24" height="2" fill="#5ccf3c"/><rect x="2132" y="170" width="2" height="32" fill="#4aaa34"/><rect x="2154" y="200" width="22" height="2" fill="#43a232"/><rect x="2154" y="170" width="2" height="32" fill="#4aaa34"/><rect x="2174" y="170" width="24" height="2" fill="#5ccf3c"/><rect x="2174" y="170" width="2" height="32" fill="#4aaa34"/><rect x="2196" y="200" width="22" height="2" fill="#43a232"/><rect x="2196" y="170" width="2" height="32" fill="#4aaa34"/><rect x="2216" y="170" width="2" height="32" fill="#4aaa34"/><rect x="857" y="213" width="42" height="30" fill="#3a0404" stroke="#d8301f" stroke-width="2"/><rect x="898" y="242" width="44" height="2" fill="#43a232"/><rect x="940" y="212" width="2" height="32" fill="#4aaa34"/><rect x="940" y="212" width="1278" height="2" fill="#5ccf3c"/><path d="M856 270 L857 255 H896 L899 270 L896 285 H857 Z" fill="none" stroke="#d8301f" stroke-width="2"/><text x="0" y="0" transform="translate(859,280) scale(0.83,1)" text-anchor="start" font-family="'Liberation Mono', monospace" font-size="28.4" fill="#e6e6e6" stroke="#e6e6e6" stroke-width="0.55">xx</text><path d="M899 270 L903 285" stroke="#46a232" stroke-width="2" fill="none"/><path d="M1065 285 L1069 270" stroke="#46a232" stroke-width="2" fill="none"/><rect x="903" y="284" width="162" height="2" fill="#5ccf3c"/><text x="0" y="0" transform="translate(902,280) scale(0.83,1)" text-anchor="start" font-family="'Liberation Mono', monospace" font-size="28.4" fill="#e6e6e6" stroke="#e6e6e6" stroke-width="0.55">00</text><line x1="906.5" y1="276.8" x2="911.7" y2="264.2" stroke="#e6e6e6" stroke-width="2.2"/><line x1="920.6" y1="276.8" x2="925.8" y2="264.2" stroke="#e6e6e6" stroke-width="2.2"/><path d="M1069 270 L1073 255" stroke="#46a232" stroke-width="2" fill="none"/><path d="M1069 270 L1073 285" stroke="#46a232" stroke-width="2" fill="none"/><path d="M1149 255 L1153 270" stroke="#46a232" stroke-width="2" fill="none"/><path d="M1149 285 L1153 270" stroke="#46a232" stroke-width="2" fill="none"/><rect x="1073" y="254" width="76" height="2" fill="#5ccf3c"/><rect x="1073" y="284" width="76" height="2" fill="#5ccf3c"/><text x="0" y="0" transform="translate(1072,280) scale(0.83,1)" text-anchor="start" font-family="'Liberation Mono', monospace" font-size="28.4" fill="#e6e6e6" stroke="#e6e6e6" stroke-width="0.55">01</text><line x1="1076.5" y1="276.8" x2="1081.7" y2="264.2" stroke="#e6e6e6" stroke-width="2.2"/><path d="M1153 270 L1157 255" stroke="#46a232" stroke-width="2" fill="none"/><path d="M1153 270 L1157 285" stroke="#46a232" stroke-width="2" fill="none"/><path d="M1193 255 L1197 270" stroke="#46a232" stroke-width="2" fill="none"/><path d="M1193 285 L1197 270" stroke="#46a232" stroke-width="2" fill="none"/><rect x="1157" y="254" width="36" height="2" fill="#5ccf3c"/><rect x="1157" y="284" width="36" height="2" fill="#5ccf3c"/><text x="0" y="0" transform="translate(1156,280) scale(0.83,1)" text-anchor="start" font-family="'Liberation Mono', monospace" font-size="28.4" fill="#e6e6e6" stroke="#e6e6e6" stroke-width="0.55">10</text><line x1="1174.6" y1="276.8" x2="1179.8" y2="264.2" stroke="#e6e6e6" stroke-width="2.2"/><path d="M1197 270 L1201 285" stroke="#46a232" stroke-width="2" fill="none"/><path d="M1277 285 L1281 270" stroke="#46a232" stroke-width="2" fill="none"/><rect x="1201" y="284" width="76" height="2" fill="#5ccf3c"/><text x="0" y="0" transform="translate(1200,280) scale(0.83,1)" text-anchor="start" font-family="'Liberation Mono', monospace" font-size="28.4" fill="#e6e6e6" stroke="#e6e6e6" stroke-width="0.55">00</text><line x1="1204.5" y1="276.8" x2="1209.7" y2="264.2" stroke="#e6e6e6" stroke-width="2.2"/><line x1="1218.6" y1="276.8" x2="1223.8" y2="264.2" stroke="#e6e6e6" stroke-width="2.2"/><path d="M1281 270 L1285 255" stroke="#46a232" stroke-width="2" fill="none"/><path d="M1281 270 L1285 285" stroke="#46a232" stroke-width="2" fill="none"/><path d="M1363 255 L1367 270" stroke="#46a232" stroke-width="2" fill="none"/><path d="M1363 285 L1367 270" stroke="#46a232" stroke-width="2" fill="none"/><rect x="1285" y="254" width="78" height="2" fill="#5ccf3c"/><rect x="1285" y="284" width="78" height="2" fill="#5ccf3c"/><text x="0" y="0" transform="translate(1284,280) scale(0.83,1)" text-anchor="start" font-family="'Liberation Mono', monospace" font-size="28.4" fill="#e6e6e6" stroke="#e6e6e6" stroke-width="0.55">01</text><line x1="1288.5" y1="276.8" x2="1293.7" y2="264.2" stroke="#e6e6e6" stroke-width="2.2"/><path d="M1367 270 L1371 255" stroke="#46a232" stroke-width="2" fill="none"/><path d="M1367 270 L1371 285" stroke="#46a232" stroke-width="2" fill="none"/><path d="M1405 255 L1409 270" stroke="#46a232" stroke-width="2" fill="none"/><path d="M1405 285 L1409 270" stroke="#46a232" stroke-width="2" fill="none"/><rect x="1371" y="254" width="34" height="2" fill="#5ccf3c"/><rect x="1371" y="284" width="34" height="2" fill="#5ccf3c"/><text x="0" y="0" transform="translate(1370,280) scale(0.83,1)" text-anchor="start" font-family="'Liberation Mono', monospace" font-size="28.4" fill="#e6e6e6" stroke="#e6e6e6" stroke-width="0.55">10</text><line x1="1388.6" y1="276.8" x2="1393.8" y2="264.2" stroke="#e6e6e6" stroke-width="2.2"/><path d="M1409 270 L1413 285" stroke="#46a232" stroke-width="2" fill="none"/><path d="M1491 285 L1495 270" stroke="#46a232" stroke-width="2" fill="none"/><rect x="1413" y="284" width="78" height="2" fill="#5ccf3c"/><text x="0" y="0" transform="translate(1412,280) scale(0.83,1)" text-anchor="start" font-family="'Liberation Mono', monospace" font-size="28.4" fill="#e6e6e6" stroke="#e6e6e6" stroke-width="0.55">00</text><line x1="1416.5" y1="276.8" x2="1421.7" y2="264.2" stroke="#e6e6e6" stroke-width="2.2"/><line x1="1430.6" y1="276.8" x2="1435.8" y2="264.2" stroke="#e6e6e6" stroke-width="2.2"/><path d="M1495 270 L1499 255" stroke="#46a232" stroke-width="2" fill="none"/><path d="M1495 270 L1499 285" stroke="#46a232" stroke-width="2" fill="none"/><path d="M1575 255 L1579 270" stroke="#46a232" stroke-width="2" fill="none"/><path d="M1575 285 L1579 270" stroke="#46a232" stroke-width="2" fill="none"/><rect x="1499" y="254" width="76" height="2" fill="#5ccf3c"/><rect x="1499" y="284" width="76" height="2" fill="#5ccf3c"/><text x="0" y="0" transform="translate(1498,280) scale(0.83,1)" text-anchor="start" font-family="'Liberation Mono', monospace" font-size="28.4" fill="#e6e6e6" stroke="#e6e6e6" stroke-width="0.55">01</text><line x1="1502.5" y1="276.8" x2="1507.7" y2="264.2" stroke="#e6e6e6" stroke-width="2.2"/><path d="M1579 270 L1583 255" stroke="#46a232" stroke-width="2" fill="none"/><path d="M1579 270 L1583 285" stroke="#46a232" stroke-width="2" fill="none"/><path d="M1619 255 L1623 270" stroke="#46a232" stroke-width="2" fill="none"/><path d="M1619 285 L1623 270" stroke="#46a232" stroke-width="2" fill="none"/><rect x="1583" y="254" width="36" height="2" fill="#5ccf3c"/><rect x="1583" y="284" width="36" height="2" fill="#5ccf3c"/><text x="0" y="0" transform="translate(1582,280) scale(0.83,1)" text-anchor="start" font-family="'Liberation Mono', monospace" font-size="28.4" fill="#e6e6e6" stroke="#e6e6e6" stroke-width="0.55">10</text><line x1="1600.6" y1="276.8" x2="1605.8" y2="264.2" stroke="#e6e6e6" stroke-width="2.2"/><path d="M1623 270 L1627 285" stroke="#46a232" stroke-width="2" fill="none"/><path d="M1703 285 L1707 270" stroke="#46a232" stroke-width="2" fill="none"/><rect x="1627" y="284" width="76" height="2" fill="#5ccf3c"/><text x="0" y="0" transform="translate(1626,280) scale(0.83,1)" text-anchor="start" font-family="'Liberation Mono', monospace" font-size="28.4" fill="#e6e6e6" stroke="#e6e6e6" stroke-width="0.55">00</text><line x1="1630.5" y1="276.8" x2="1635.7" y2="264.2" stroke="#e6e6e6" stroke-width="2.2"/><line x1="1644.6" y1="276.8" x2="1649.8" y2="264.2" stroke="#e6e6e6" stroke-width="2.2"/><path d="M1707 270 L1711 255" stroke="#46a232" stroke-width="2" fill="none"/><path d="M1707 270 L1711 285" stroke="#46a232" stroke-width="2" fill="none"/><path d="M1789 255 L1793 270" stroke="#46a232" stroke-width="2" fill="none"/><path d="M1789 285 L1793 270" stroke="#46a232" stroke-width="2" fill="none"/><rect x="1711" y="254" width="78" height="2" fill="#5ccf3c"/><rect x="1711" y="284" width="78" height="2" fill="#5ccf3c"/><text x="0" y="0" transform="translate(1710,280) scale(0.83,1)" text-anchor="start" font-family="'Liberation Mono', monospace" font-size="28.4" fill="#e6e6e6" stroke="#e6e6e6" stroke-width="0.55">01</text><line x1="1714.5" y1="276.8" x2="1719.7" y2="264.2" stroke="#e6e6e6" stroke-width="2.2"/><path d="M1793 270 L1797 255" stroke="#46a232" stroke-width="2" fill="none"/><path d="M1793 270 L1797 285" stroke="#46a232" stroke-width="2" fill="none"/><rect x="1797" y="254" width="416" height="2" fill="#5ccf3c"/><rect x="1797" y="284" width="416" height="2" fill="#5ccf3c"/><text x="0" y="0" transform="translate(1796,280) scale(0.83,1)" text-anchor="start" font-family="'Liberation Mono', monospace" font-size="28.4" fill="#e6e6e6" stroke="#e6e6e6" stroke-width="0.55">10</text><line x1="1814.6" y1="276.8" x2="1819.8" y2="264.2" stroke="#e6e6e6" stroke-width="2.2"/><path d="M856 312 L857 297 H896 L899 312 L896 327 H857 Z" fill="none" stroke="#d8301f" stroke-width="2"/><text x="0" y="0" transform="translate(859,322) scale(0.83,1)" text-anchor="start" font-family="'Liberation Mono', monospace" font-size="28.4" fill="#e6e6e6" stroke="#e6e6e6" stroke-width="0.55">x+</text><path d="M899 312 L903 327" stroke="#46a232" stroke-width="2" fill="none"/><path d="M979 327 L983 312" stroke="#46a232" stroke-width="2" fill="none"/><rect x="903" y="326" width="76" height="2" fill="#5ccf3c"/><text x="0" y="0" transform="translate(902,322) scale(0.83,1)" text-anchor="start" font-family="'Liberation Mono', monospace" font-size="28.4" fill="#e6e6e6" stroke="#e6e6e6" stroke-width="0.55">0000+</text><line x1="906.5" y1="318.8" x2="911.7" y2="306.2" stroke="#e6e6e6" stroke-width="2.2"/><line x1="920.6" y1="318.8" x2="925.8" y2="306.2" stroke="#e6e6e6" stroke-width="2.2"/><line x1="934.8" y1="318.8" x2="940.0" y2="306.2" stroke="#e6e6e6" stroke-width="2.2"/><line x1="948.9" y1="318.8" x2="954.1" y2="306.2" stroke="#e6e6e6" stroke-width="2.2"/><path d="M983 312 L987 297" stroke="#46a232" stroke-width="2" fill="none"/><path d="M983 312 L987 327" stroke="#46a232" stroke-width="2" fill="none"/><path d="M1193 297 L1197 312" stroke="#46a232" stroke-width="2" fill="none"/><path d="M1193 327 L1197 312" stroke="#46a232" stroke-width="2" fill="none"/><rect x="987" y="296" width="206" height="2" fill="#5ccf3c"/><rect x="987" y="326" width="206" height="2" fill="#5ccf3c"/><text x="0" y="0" transform="translate(986,322) scale(0.83,1)" text-anchor="start" font-family="'Liberation Mono', monospace" font-size="28.4" fill="#e6e6e6" stroke="#e6e6e6" stroke-width="0.55">00000008</text><line x1="990.5" y1="318.8" x2="995.7" y2="306.2" stroke="#e6e6e6" stroke-width="2.2"/><line x1="1004.6" y1="318.8" x2="1009.8" y2="306.2" stroke="#e6e6e6" stroke-width="2.2"/><line x1="1018.8" y1="318.8" x2="1024.0" y2="306.2" stroke="#e6e6e6" stroke-width="2.2"/><line x1="1032.9" y1="318.8" x2="1038.1" y2="306.2" stroke="#e6e6e6" stroke-width="2.2"/><line x1="1047.0" y1="318.8" x2="1052.2" y2="306.2" stroke="#e6e6e6" stroke-width="2.2"/><line x1="1061.2" y1="318.8" x2="1066.4" y2="306.2" stroke="#e6e6e6" stroke-width="2.2"/><line x1="1075.3" y1="318.8" x2="1080.5" y2="306.2" stroke="#e6e6e6" stroke-width="2.2"/><path d="M1197 312 L1201 297" stroke="#46a232" stroke-width="2" fill="none"/><path d="M1197 312 L1201 327" stroke="#46a232" stroke-width="2" fill="none"/><path d="M1405 297 L1409 312" stroke="#46a232" stroke-width="2" fill="none"/><path d="M1405 327 L1409 312" stroke="#46a232" stroke-width="2" fill="none"/><rect x="1201" y="296" width="204" height="2" fill="#5ccf3c"/><rect x="1201" y="326" width="204" height="2" fill="#5ccf3c"/><text x="0" y="0" transform="translate(1200,322) scale(0.83,1)" text-anchor="start" font-family="'Liberation Mono', monospace" font-size="28.4" fill="#e6e6e6" stroke="#e6e6e6" stroke-width="0.55">0000007F</text><line x1="1204.5" y1="318.8" x2="1209.7" y2="306.2" stroke="#e6e6e6" stroke-width="2.2"/><line x1="1218.6" y1="318.8" x2="1223.8" y2="306.2" stroke="#e6e6e6" stroke-width="2.2"/><line x1="1232.8" y1="318.8" x2="1238.0" y2="306.2" stroke="#e6e6e6" stroke-width="2.2"/><line x1="1246.9" y1="318.8" x2="1252.1" y2="306.2" stroke="#e6e6e6" stroke-width="2.2"/><line x1="1261.0" y1="318.8" x2="1266.2" y2="306.2" stroke="#e6e6e6" stroke-width="2.2"/><line x1="1275.2" y1="318.8" x2="1280.4" y2="306.2" stroke="#e6e6e6" stroke-width="2.2"/><path d="M1409 312 L1413 297" stroke="#46a232" stroke-width="2" fill="none"/><path d="M1409 312 L1413 327" stroke="#46a232" stroke-width="2" fill="none"/><path d="M1619 297 L1623 312" stroke="#46a232" stroke-width="2" fill="none"/><path d="M1619 327 L1623 312" stroke="#46a232" stroke-width="2" fill="none"/><rect x="1413" y="296" width="206" height="2" fill="#5ccf3c"/><rect x="1413" y="326" width="206" height="2" fill="#5ccf3c"/><text x="0" y="0" transform="translate(1412,322) scale(0.83,1)" text-anchor="start" font-family="'Liberation Mono', monospace" font-size="28.4" fill="#e6e6e6" stroke="#e6e6e6" stroke-width="0.55">FFFFFF80</text><line x1="1515.5" y1="318.8" x2="1520.7" y2="306.2" stroke="#e6e6e6" stroke-width="2.2"/><path d="M1623 312 L1627 297" stroke="#46a232" stroke-width="2" fill="none"/><path d="M1623 312 L1627 327" stroke="#46a232" stroke-width="2" fill="none"/><rect x="1627" y="296" width="586" height="2" fill="#5ccf3c"/><rect x="1627" y="326" width="586" height="2" fill="#5ccf3c"/><text x="0" y="0" transform="translate(1626,322) scale(0.83,1)" text-anchor="start" font-family="'Liberation Mono', monospace" font-size="28.4" fill="#e6e6e6" stroke="#e6e6e6" stroke-width="0.55">FFFFFFCB</text><path d="M856 354 L857 339 H896 L899 354 L896 369 H857 Z" fill="none" stroke="#d8301f" stroke-width="2"/><text x="0" y="0" transform="translate(859,364) scale(0.83,1)" text-anchor="start" font-family="'Liberation Mono', monospace" font-size="28.4" fill="#e6e6e6" stroke="#e6e6e6" stroke-width="0.55">x+</text><path d="M899 354 L903 369" stroke="#46a232" stroke-width="2" fill="none"/><path d="M979 369 L983 354" stroke="#46a232" stroke-width="2" fill="none"/><rect x="903" y="368" width="76" height="2" fill="#5ccf3c"/><text x="0" y="0" transform="translate(902,364) scale(0.83,1)" text-anchor="start" font-family="'Liberation Mono', monospace" font-size="28.4" fill="#e6e6e6" stroke="#e6e6e6" stroke-width="0.55">0000+</text><line x1="906.5" y1="360.8" x2="911.7" y2="348.2" stroke="#e6e6e6" stroke-width="2.2"/><line x1="920.6" y1="360.8" x2="925.8" y2="348.2" stroke="#e6e6e6" stroke-width="2.2"/><line x1="934.8" y1="360.8" x2="940.0" y2="348.2" stroke="#e6e6e6" stroke-width="2.2"/><line x1="948.9" y1="360.8" x2="954.1" y2="348.2" stroke="#e6e6e6" stroke-width="2.2"/><path d="M983 354 L987 339" stroke="#46a232" stroke-width="2" fill="none"/><path d="M983 354 L987 369" stroke="#46a232" stroke-width="2" fill="none"/><path d="M1193 339 L1197 354" stroke="#46a232" stroke-width="2" fill="none"/><path d="M1193 369 L1197 354" stroke="#46a232" stroke-width="2" fill="none"/><rect x="987" y="338" width="206" height="2" fill="#5ccf3c"/><rect x="987" y="368" width="206" height="2" fill="#5ccf3c"/><text x="0" y="0" transform="translate(986,364) scale(0.83,1)" text-anchor="start" font-family="'Liberation Mono', monospace" font-size="28.4" fill="#e6e6e6" stroke="#e6e6e6" stroke-width="0.55">00000006</text><line x1="990.5" y1="360.8" x2="995.7" y2="348.2" stroke="#e6e6e6" stroke-width="2.2"/><line x1="1004.6" y1="360.8" x2="1009.8" y2="348.2" stroke="#e6e6e6" stroke-width="2.2"/><line x1="1018.8" y1="360.8" x2="1024.0" y2="348.2" stroke="#e6e6e6" stroke-width="2.2"/><line x1="1032.9" y1="360.8" x2="1038.1" y2="348.2" stroke="#e6e6e6" stroke-width="2.2"/><line x1="1047.0" y1="360.8" x2="1052.2" y2="348.2" stroke="#e6e6e6" stroke-width="2.2"/><line x1="1061.2" y1="360.8" x2="1066.4" y2="348.2" stroke="#e6e6e6" stroke-width="2.2"/><line x1="1075.3" y1="360.8" x2="1080.5" y2="348.2" stroke="#e6e6e6" stroke-width="2.2"/><path d="M1197 354 L1201 339" stroke="#46a232" stroke-width="2" fill="none"/><path d="M1197 354 L1201 369" stroke="#46a232" stroke-width="2" fill="none"/><path d="M1405 339 L1409 354" stroke="#46a232" stroke-width="2" fill="none"/><path d="M1405 369 L1409 354" stroke="#46a232" stroke-width="2" fill="none"/><rect x="1201" y="338" width="204" height="2" fill="#5ccf3c"/><rect x="1201" y="368" width="204" height="2" fill="#5ccf3c"/><text x="0" y="0" transform="translate(1200,364) scale(0.83,1)" text-anchor="start" font-family="'Liberation Mono', monospace" font-size="28.4" fill="#e6e6e6" stroke="#e6e6e6" stroke-width="0.55">0000007F</text><line x1="1204.5" y1="360.8" x2="1209.7" y2="348.2" stroke="#e6e6e6" stroke-width="2.2"/><line x1="1218.6" y1="360.8" x2="1223.8" y2="348.2" stroke="#e6e6e6" stroke-width="2.2"/><line x1="1232.8" y1="360.8" x2="1238.0" y2="348.2" stroke="#e6e6e6" stroke-width="2.2"/><line x1="1246.9" y1="360.8" x2="1252.1" y2="348.2" stroke="#e6e6e6" stroke-width="2.2"/><line x1="1261.0" y1="360.8" x2="1266.2" y2="348.2" stroke="#e6e6e6" stroke-width="2.2"/><line x1="1275.2" y1="360.8" x2="1280.4" y2="348.2" stroke="#e6e6e6" stroke-width="2.2"/><path d="M1409 354 L1413 339" stroke="#46a232" stroke-width="2" fill="none"/><path d="M1409 354 L1413 369" stroke="#46a232" stroke-width="2" fill="none"/><path d="M1619 339 L1623 354" stroke="#46a232" stroke-width="2" fill="none"/><path d="M1619 369 L1623 354" stroke="#46a232" stroke-width="2" fill="none"/><rect x="1413" y="338" width="206" height="2" fill="#5ccf3c"/><rect x="1413" y="368" width="206" height="2" fill="#5ccf3c"/><text x="0" y="0" transform="translate(1412,364) scale(0.83,1)" text-anchor="start" font-family="'Liberation Mono', monospace" font-size="28.4" fill="#e6e6e6" stroke="#e6e6e6" stroke-width="0.55">FFFFFF80</text><line x1="1515.5" y1="360.8" x2="1520.7" y2="348.2" stroke="#e6e6e6" stroke-width="2.2"/><path d="M1623 354 L1627 339" stroke="#46a232" stroke-width="2" fill="none"/><path d="M1623 354 L1627 369" stroke="#46a232" stroke-width="2" fill="none"/><rect x="1627" y="338" width="586" height="2" fill="#5ccf3c"/><rect x="1627" y="368" width="586" height="2" fill="#5ccf3c"/><text x="0" y="0" transform="translate(1626,364) scale(0.83,1)" text-anchor="start" font-family="'Liberation Mono', monospace" font-size="28.4" fill="#e6e6e6" stroke="#e6e6e6" stroke-width="0.55">00000034</text><line x1="1630.5" y1="360.8" x2="1635.7" y2="348.2" stroke="#e6e6e6" stroke-width="2.2"/><line x1="1644.6" y1="360.8" x2="1649.8" y2="348.2" stroke="#e6e6e6" stroke-width="2.2"/><line x1="1658.8" y1="360.8" x2="1664.0" y2="348.2" stroke="#e6e6e6" stroke-width="2.2"/><line x1="1672.9" y1="360.8" x2="1678.1" y2="348.2" stroke="#e6e6e6" stroke-width="2.2"/><line x1="1687.0" y1="360.8" x2="1692.2" y2="348.2" stroke="#e6e6e6" stroke-width="2.2"/><line x1="1701.2" y1="360.8" x2="1706.4" y2="348.2" stroke="#e6e6e6" stroke-width="2.2"/><path d="M856 396 L857 381 H938 L941 396 L938 411 H857 Z" fill="none" stroke="#d8301f" stroke-width="2"/><text x="0" y="0" transform="translate(859,406) scale(0.83,1)" text-anchor="start" font-family="'Liberation Mono', monospace" font-size="28.4" fill="#e6e6e6" stroke="#e6e6e6" stroke-width="0.55">xxxx+</text><path d="M941 396 L945 411" stroke="#46a232" stroke-width="2" fill="none"/><path d="M979 411 L983 396" stroke="#46a232" stroke-width="2" fill="none"/><rect x="945" y="410" width="34" height="2" fill="#5ccf3c"/><text x="0" y="0" transform="translate(944,406) scale(0.83,1)" text-anchor="start" font-family="'Liberation Mono', monospace" font-size="28.4" fill="#e6e6e6" stroke="#e6e6e6" stroke-width="0.55">0+</text><line x1="948.5" y1="402.8" x2="953.7" y2="390.2" stroke="#e6e6e6" stroke-width="2.2"/><path d="M983 396 L987 381" stroke="#46a232" stroke-width="2" fill="none"/><path d="M983 396 L987 411" stroke="#46a232" stroke-width="2" fill="none"/><path d="M1065 381 L1069 396" stroke="#46a232" stroke-width="2" fill="none"/><path d="M1065 411 L1069 396" stroke="#46a232" stroke-width="2" fill="none"/><rect x="987" y="380" width="78" height="2" fill="#5ccf3c"/><rect x="987" y="410" width="78" height="2" fill="#5ccf3c"/><text x="0" y="0" transform="translate(986,406) scale(0.83,1)" text-anchor="start" font-family="'Liberation Mono', monospace" font-size="28.4" fill="#e6e6e6" stroke="#e6e6e6" stroke-width="0.55">0000+</text><line x1="990.5" y1="402.8" x2="995.7" y2="390.2" stroke="#e6e6e6" stroke-width="2.2"/><line x1="1004.6" y1="402.8" x2="1009.8" y2="390.2" stroke="#e6e6e6" stroke-width="2.2"/><line x1="1018.8" y1="402.8" x2="1024.0" y2="390.2" stroke="#e6e6e6" stroke-width="2.2"/><line x1="1032.9" y1="402.8" x2="1038.1" y2="390.2" stroke="#e6e6e6" stroke-width="2.2"/><path d="M1069 396 L1073 381" stroke="#46a232" stroke-width="2" fill="none"/><path d="M1069 396 L1073 411" stroke="#46a232" stroke-width="2" fill="none"/><path d="M1149 381 L1153 396" stroke="#46a232" stroke-width="2" fill="none"/><path d="M1149 411 L1153 396" stroke="#46a232" stroke-width="2" fill="none"/><rect x="1073" y="380" width="76" height="2" fill="#5ccf3c"/><rect x="1073" y="410" width="76" height="2" fill="#5ccf3c"/><text x="0" y="0" transform="translate(1072,406) scale(0.83,1)" text-anchor="start" font-family="'Liberation Mono', monospace" font-size="28.4" fill="#e6e6e6" stroke="#e6e6e6" stroke-width="0.55">0000+</text><line x1="1076.5" y1="402.8" x2="1081.7" y2="390.2" stroke="#e6e6e6" stroke-width="2.2"/><line x1="1090.6" y1="402.8" x2="1095.8" y2="390.2" stroke="#e6e6e6" stroke-width="2.2"/><line x1="1104.8" y1="402.8" x2="1110.0" y2="390.2" stroke="#e6e6e6" stroke-width="2.2"/><line x1="1118.9" y1="402.8" x2="1124.1" y2="390.2" stroke="#e6e6e6" stroke-width="2.2"/><path d="M1153 396 L1157 381" stroke="#46a232" stroke-width="2" fill="none"/><path d="M1153 396 L1157 411" stroke="#46a232" stroke-width="2" fill="none"/><path d="M1193 381 L1197 396" stroke="#46a232" stroke-width="2" fill="none"/><path d="M1193 411 L1197 396" stroke="#46a232" stroke-width="2" fill="none"/><rect x="1157" y="380" width="36" height="2" fill="#5ccf3c"/><rect x="1157" y="410" width="36" height="2" fill="#5ccf3c"/><text x="0" y="0" transform="translate(1156,406) scale(0.83,1)" text-anchor="start" font-family="'Liberation Mono', monospace" font-size="28.4" fill="#e6e6e6" stroke="#e6e6e6" stroke-width="0.55">0+</text><line x1="1160.5" y1="402.8" x2="1165.7" y2="390.2" stroke="#e6e6e6" stroke-width="2.2"/><path d="M1197 396 L1201 381" stroke="#46a232" stroke-width="2" fill="none"/><path d="M1197 396 L1201 411" stroke="#46a232" stroke-width="2" fill="none"/><path d="M1277 381 L1281 396" stroke="#46a232" stroke-width="2" fill="none"/><path d="M1277 411 L1281 396" stroke="#46a232" stroke-width="2" fill="none"/><rect x="1201" y="380" width="76" height="2" fill="#5ccf3c"/><rect x="1201" y="410" width="76" height="2" fill="#5ccf3c"/><text x="0" y="0" transform="translate(1200,406) scale(0.83,1)" text-anchor="start" font-family="'Liberation Mono', monospace" font-size="28.4" fill="#e6e6e6" stroke="#e6e6e6" stroke-width="0.55">0000+</text><line x1="1204.5" y1="402.8" x2="1209.7" y2="390.2" stroke="#e6e6e6" stroke-width="2.2"/><line x1="1218.6" y1="402.8" x2="1223.8" y2="390.2" stroke="#e6e6e6" stroke-width="2.2"/><line x1="1232.8" y1="402.8" x2="1238.0" y2="390.2" stroke="#e6e6e6" stroke-width="2.2"/><line x1="1246.9" y1="402.8" x2="1252.1" y2="390.2" stroke="#e6e6e6" stroke-width="2.2"/><path d="M1281 396 L1285 411" stroke="#46a232" stroke-width="2" fill="none"/><path d="M1405 411 L1409 396" stroke="#46a232" stroke-width="2" fill="none"/><rect x="1285" y="410" width="120" height="2" fill="#5ccf3c"/><text x="0" y="0" transform="translate(1284,406) scale(0.83,1)" text-anchor="start" font-family="'Liberation Mono', monospace" font-size="28.4" fill="#e6e6e6" stroke="#e6e6e6" stroke-width="0.55">0000000+</text><line x1="1288.5" y1="402.8" x2="1293.7" y2="390.2" stroke="#e6e6e6" stroke-width="2.2"/><line x1="1302.6" y1="402.8" x2="1307.8" y2="390.2" stroke="#e6e6e6" stroke-width="2.2"/><line x1="1316.8" y1="402.8" x2="1322.0" y2="390.2" stroke="#e6e6e6" stroke-width="2.2"/><line x1="1330.9" y1="402.8" x2="1336.1" y2="390.2" stroke="#e6e6e6" stroke-width="2.2"/><line x1="1345.0" y1="402.8" x2="1350.2" y2="390.2" stroke="#e6e6e6" stroke-width="2.2"/><line x1="1359.2" y1="402.8" x2="1364.4" y2="390.2" stroke="#e6e6e6" stroke-width="2.2"/><line x1="1373.3" y1="402.8" x2="1378.5" y2="390.2" stroke="#e6e6e6" stroke-width="2.2"/><path d="M1409 396 L1413 381" stroke="#46a232" stroke-width="2" fill="none"/><path d="M1409 396 L1413 411" stroke="#46a232" stroke-width="2" fill="none"/><path d="M1491 381 L1495 396" stroke="#46a232" stroke-width="2" fill="none"/><path d="M1491 411 L1495 396" stroke="#46a232" stroke-width="2" fill="none"/><rect x="1413" y="380" width="78" height="2" fill="#5ccf3c"/><rect x="1413" y="410" width="78" height="2" fill="#5ccf3c"/><text x="0" y="0" transform="translate(1412,406) scale(0.83,1)" text-anchor="start" font-family="'Liberation Mono', monospace" font-size="28.4" fill="#e6e6e6" stroke="#e6e6e6" stroke-width="0.55">1FFF+</text><path d="M1495 396 L1499 411" stroke="#46a232" stroke-width="2" fill="none"/><path d="M1619 411 L1623 396" stroke="#46a232" stroke-width="2" fill="none"/><rect x="1499" y="410" width="120" height="2" fill="#5ccf3c"/><text x="0" y="0" transform="translate(1498,406) scale(0.83,1)" text-anchor="start" font-family="'Liberation Mono', monospace" font-size="28.4" fill="#e6e6e6" stroke="#e6e6e6" stroke-width="0.55">0000000+</text><line x1="1502.5" y1="402.8" x2="1507.7" y2="390.2" stroke="#e6e6e6" stroke-width="2.2"/><line x1="1516.6" y1="402.8" x2="1521.8" y2="390.2" stroke="#e6e6e6" stroke-width="2.2"/><line x1="1530.8" y1="402.8" x2="1536.0" y2="390.2" stroke="#e6e6e6" stroke-width="2.2"/><line x1="1544.9" y1="402.8" x2="1550.1" y2="390.2" stroke="#e6e6e6" stroke-width="2.2"/><line x1="1559.0" y1="402.8" x2="1564.2" y2="390.2" stroke="#e6e6e6" stroke-width="2.2"/><line x1="1573.2" y1="402.8" x2="1578.4" y2="390.2" stroke="#e6e6e6" stroke-width="2.2"/><line x1="1587.3" y1="402.8" x2="1592.5" y2="390.2" stroke="#e6e6e6" stroke-width="2.2"/><path d="M1623 396 L1627 381" stroke="#46a232" stroke-width="2" fill="none"/><path d="M1623 396 L1627 411" stroke="#46a232" stroke-width="2" fill="none"/><path d="M1703 381 L1707 396" stroke="#46a232" stroke-width="2" fill="none"/><path d="M1703 411 L1707 396" stroke="#46a232" stroke-width="2" fill="none"/><rect x="1627" y="380" width="76" height="2" fill="#5ccf3c"/><rect x="1627" y="410" width="76" height="2" fill="#5ccf3c"/><text x="0" y="0" transform="translate(1626,406) scale(0.83,1)" text-anchor="start" font-family="'Liberation Mono', monospace" font-size="28.4" fill="#e6e6e6" stroke="#e6e6e6" stroke-width="0.55">1FFF+</text><path d="M1707 396 L1711 381" stroke="#46a232" stroke-width="2" fill="none"/><path d="M1707 396 L1711 411" stroke="#46a232" stroke-width="2" fill="none"/><path d="M1789 381 L1793 396" stroke="#46a232" stroke-width="2" fill="none"/><path d="M1789 411 L1793 396" stroke="#46a232" stroke-width="2" fill="none"/><rect x="1711" y="380" width="78" height="2" fill="#5ccf3c"/><rect x="1711" y="410" width="78" height="2" fill="#5ccf3c"/><text x="0" y="0" transform="translate(1710,406) scale(0.83,1)" text-anchor="start" font-family="'Liberation Mono', monospace" font-size="28.4" fill="#e6e6e6" stroke="#e6e6e6" stroke-width="0.55">1FFF+</text><path d="M1793 396 L1797 381" stroke="#46a232" stroke-width="2" fill="none"/><path d="M1793 396 L1797 411" stroke="#46a232" stroke-width="2" fill="none"/><rect x="1797" y="380" width="416" height="2" fill="#5ccf3c"/><rect x="1797" y="410" width="416" height="2" fill="#5ccf3c"/><text x="0" y="0" transform="translate(1796,406) scale(0.83,1)" text-anchor="start" font-family="'Liberation Mono', monospace" font-size="28.4" fill="#e6e6e6" stroke="#e6e6e6" stroke-width="0.55">000000002</text><line x1="1800.5" y1="402.8" x2="1805.7" y2="390.2" stroke="#e6e6e6" stroke-width="2.2"/><line x1="1814.6" y1="402.8" x2="1819.8" y2="390.2" stroke="#e6e6e6" stroke-width="2.2"/><line x1="1828.8" y1="402.8" x2="1834.0" y2="390.2" stroke="#e6e6e6" stroke-width="2.2"/><line x1="1842.9" y1="402.8" x2="1848.1" y2="390.2" stroke="#e6e6e6" stroke-width="2.2"/><line x1="1857.0" y1="402.8" x2="1862.2" y2="390.2" stroke="#e6e6e6" stroke-width="2.2"/><line x1="1871.2" y1="402.8" x2="1876.4" y2="390.2" stroke="#e6e6e6" stroke-width="2.2"/><line x1="1885.3" y1="402.8" x2="1890.5" y2="390.2" stroke="#e6e6e6" stroke-width="2.2"/><line x1="1899.5" y1="402.8" x2="1904.7" y2="390.2" stroke="#e6e6e6" stroke-width="2.2"/><rect x="1628" y="380" width="74" height="4" fill="#78f058"/><rect x="1020" y="164" width="2" height="1070" fill="#d47272"/></g></svg>
</body></html>
